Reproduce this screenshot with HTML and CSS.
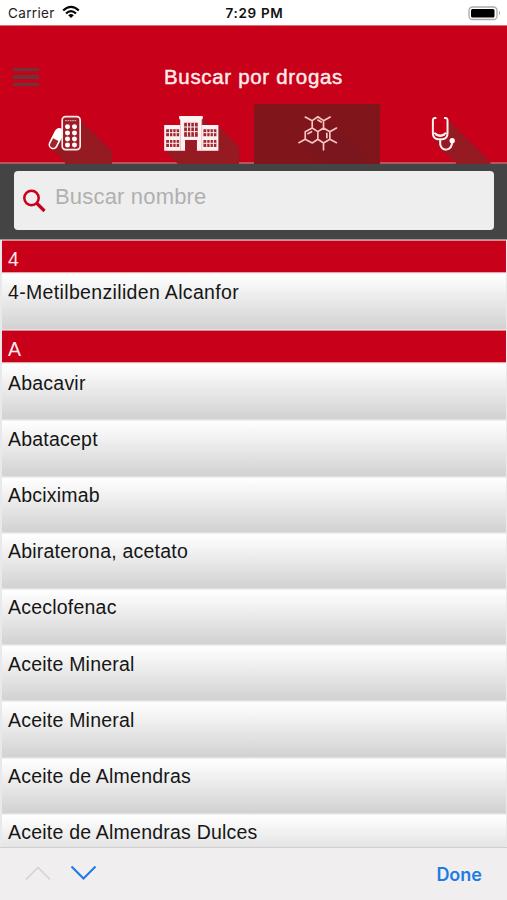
FILE: index.html
```html
<!DOCTYPE html>
<html lang="es">
<head>
<meta charset="utf-8">
<title>Buscar por drogas</title>
<link rel="stylesheet" href="styles.css">
</head>
<body>
<div class="app">
  <div class="status">
    <div class="carrier"><span>Carrier</span>
      <svg width="18" height="14" viewBox="0 0 18 14" fill="none" stroke="#050505" stroke-width="2.2"><path d="M1.2 5.5Q9 -1.8 16.8 5.5M4 8.5Q9 3.8 14 8.5"/><path d="M6.2 10.3Q9 7.7 11.8 10.3L9 13Z" fill="#050505" stroke="none"/></svg>
    </div>
    <div class="clock">7:29 PM</div>
    <svg class="battery" width="33" height="15" viewBox="0 0 33 15"><rect x="1" y="1" width="28" height="12.5" rx="3.5" fill="#fff" stroke="#aaa" stroke-width="1.3"/><rect x="3" y="3" width="23.5" height="8.5" rx="1.5" fill="#000"/><path d="M31 5Q33 7 31 9Z" fill="#999"/></svg>
  </div>
  <header class="title-bar">
    <div class="menu"><i></i><i></i><i></i></div>
    <h1>Buscar por drogas</h1>
  </header>
  <nav class="tabs">
    <div class="tab">
      <svg viewBox="0 0 127 60"><g transform="translate(30 -4) scale(.3333)">
        <path d="M145 55L247 154V192H105V186L65 145Z" fill="#951a22"/>
        <g transform="rotate(27 79 116)"><rect x="65" y="82" width="28" height="68" rx="14" fill="#fff"/><path d="M70 119H88V137Q88 146 79 146T70 137Z" fill="#a4232f"/></g>
        <rect x="97" y="50" width="54" height="99" rx="10" fill="#9c1c28" stroke="#ffe9e9" stroke-width="5"/>
        <path d="M106 62H140" stroke="#dca0a3" stroke-width="4" stroke-dasharray="5 2"/>
        <g fill="#fff"><circle cx="113" cy="80" r="7.5"/><circle cx="134" cy="80" r="7.5"/><circle cx="113" cy="99" r="7.5"/><circle cx="134" cy="99" r="7.5"/><circle cx="113" cy="117" r="7.5"/><circle cx="134" cy="117" r="7.5"/><circle cx="113" cy="135" r="7.5"/><circle cx="134" cy="135" r="7.5"/></g>
      </g></svg>
    </div>
    <div class="tab">
      <svg viewBox="0 0 127 60"><g transform="translate(13.25 -4) scale(.3333)">
        <path d="M185 50L205 75L234 78L297 140V192H113L73 150Z" fill="#951a22"/>
        <path d="M72 75H120V58H117V48H188V58H185V75H235V152H170V120H135V152H72Z" fill="#fff1f1"/>
        <g fill="#a02630"><path d="M132 68H173V110H132ZM78 88H117V109H78ZM78 120H117V141H78ZM190 88H229V109H190ZM190 120H229V141H190Z"/></g>
        <path d="M132 81H173M132 95H173M142 68V110M152 68V110M163 68V110M78 98H117M78 130H117M88 88V141M98 88V141M108 88V141M190 98H229M190 130H229M200 88V141M210 88V141M220 88V141" stroke="#fff1f1" stroke-width="3"/>
        <path d="M121 60V150M185 60V150" stroke="#e6a8ac" stroke-width="2"/>
        <path d="M135 120H170V152H135Z" fill="#981b25"/>
      </g></svg>
    </div>
    <div class="tab active">
      <svg viewBox="0 0 127 60"><g transform="translate(-4 -4) scale(.3333)" fill="none" stroke="#f5c6c2" stroke-width="5" stroke-linecap="round" stroke-linejoin="round">
        <path d="M245 70L350 175V192H220L150 130Z" fill="#7b161e" stroke="none"/>
        <path d="M204 50L221 62V84L204 95L187 84V62ZM221 84L240 95V118L221 129L204 118V95M187 84L166 95V118L187 129L204 118M187 62L166 51M221 62L241 51M240 95L260 84M240 118L260 128M221 129V150M166 118L147 128M204 60L214 66M174 101L185 95M231 100V113"/>
      </g></svg>
    </div>
    <div class="tab">
      <svg viewBox="0 0 127 60"><g transform="translate(0 -4) scale(.3333)" fill="none" stroke="#fff0f0" stroke-width="6" stroke-linecap="round">
        <path d="M203 58L332 186V192H228V187L180 145L160 108L200 110Z" fill="#951a22" stroke="none"/>
        <path d="M167 54Q159 53 159 62V100Q159 116 174 118H188Q203 116 203 100V62Q203 53 195 54M165 100Q181 113 197 100M181 119V133Q184 149 199 149Q217 147 217 124"/>
        <path d="M168 105Q181 113 194 105" stroke-width="4"/><circle cx="217" cy="122" r="8" fill="#fff" stroke="none"/>
      </g></svg>
    </div>
  </nav>
  <div class="search">
    <div class="field">
      <svg width="24" height="24" viewBox="0 0 24 24" fill="none" stroke="#c80019"><circle cx="8.500" cy="9" r="7.200" stroke-width="2.500"/><path d="M13.500 14L21.500 22" stroke-width="3.200"/></svg>
      <span>Buscar nombre</span>
    </div>
  </div>
  <main class="list">
    <h2>4</h2>
    <div class="row wide">4-Metilbenziliden Alcanfor</div>
    <h2>A</h2>
    <div class="row">Abacavir</div>
    <div class="row">Abatacept</div>
    <div class="row">Abciximab</div>
    <div class="row">Abiraterona, acetato</div>
    <div class="row">Aceclofenac</div>
    <div class="row">Aceite Mineral</div>
    <div class="row">Aceite Mineral</div>
    <div class="row">Aceite de Almendras</div>
    <div class="row">Aceite de Almendras Dulces</div>
  </main>
  <footer class="toolbar">
    <svg width="72" height="16" viewBox="0 0 72 16" fill="none"><path d="M1 14.5L13 2.5L25 14.5" stroke="#d5d3d4" stroke-width="1.6"/><path d="M46.500 1.500L58.500 13.500L70.500 1.500" stroke="#1d7bea" stroke-width="2.100"/></svg>
    <span class="done">Done</span>
  </footer>
</div>
</body>
</html>
```
FILE: styles.css
```css
* { box-sizing: border-box; }
body { margin: 0; font-family: "Liberation Sans", Arial, sans-serif; }
.app { width: 507px; height: 900px; display: flex; flex-direction: column; overflow: hidden; background: #fff; }

.status { height: 26px; flex: none; display: grid; grid-template-columns: 1fr auto 1fr; align-items: center; padding: 1px 6px 0 8px; font-family: Inter, sans-serif; border-bottom: 1px solid #dc7078; }
.carrier { display: flex; align-items: center; gap: 7px; font-size: 13.5px; letter-spacing: .35px; color: #222; }
.carrier svg { margin-top: -2px; }
.clock { font-size: 13.5px; font-weight: 600; color: #111; letter-spacing: .65px; }
.battery { justify-self: end; }

.title-bar { height: 78px; flex: none; background: #c80019; display: grid; grid-template-columns: 26px 1fr 26px; align-items: center; padding: 24px 13px 0; }
.menu { display: flex; flex-direction: column; gap: 4px; }
.menu i { height: 3.3px; background: #6d3439; }
.title-bar h1 { margin: 0; text-align: center; color: #ffecec; font-size: 20.5px; letter-spacing: .68px; font-weight: 400; white-space: nowrap; -webkit-text-stroke: .45px #ffecec; }

.tabs { height: 60px; flex: none; display: grid; grid-template-columns: repeat(4, 1fr); background: linear-gradient(#c80019 58px, #b5565b 58px); }
.tab svg { display: block; width: 100%; height: 60px; }
.tab.active { background: #80151c; }

.search { height: 76px; flex: none; background: #444; padding: 7px 13px 9px 14px; border-bottom: 1px solid #999; }
.field { height: 59px; background: #eee; border-radius: 4px; display: flex; gap: 9px; padding: 18px 9px 0; }
.field span { color: #b0b0b0; font-size: 22px; letter-spacing: .18px; line-height: 25px; margin: -5px 0 0 -1px; }

.list { flex: 1; min-height: 0; overflow: hidden; background: #e9e9e9; padding: 0 1px 0 2px; color: #161616; font-size: 19.5px; letter-spacing: .22px; }
.list h2 { height: 33px; margin: 0; padding: 6px 6px 0; font-size: 19.5px; line-height: 24px; font-weight: 400; color: #ffe9e9; background: #c80019; border-top: 1px solid #dc8a90; border-bottom: 1px solid #e8a6aa; }
.row { height: 56.2px; padding: 5.4px 6px 0; line-height: 24px; background: linear-gradient(#fff, #f4f4f4 25%, #d3d3d3 97%); border-top: 1px solid #f0f0f0; border-bottom: 1px solid #e0e0e0; }
.list h2 + .row { height: 57.2px; padding-top: 6.4px; }
.row.wide { letter-spacing: .34px; }

.toolbar { height: 53px; flex: none; display: flex; justify-content: space-between; align-items: center; padding: 0 25px; background: #f1eeef; border-top: 1px solid #d0cecf; }
.toolbar svg { margin-top: -3px; }
.done { color: #1b7ce6; font-family: Inter, sans-serif; font-size: 18px; font-weight: 600; }
```
